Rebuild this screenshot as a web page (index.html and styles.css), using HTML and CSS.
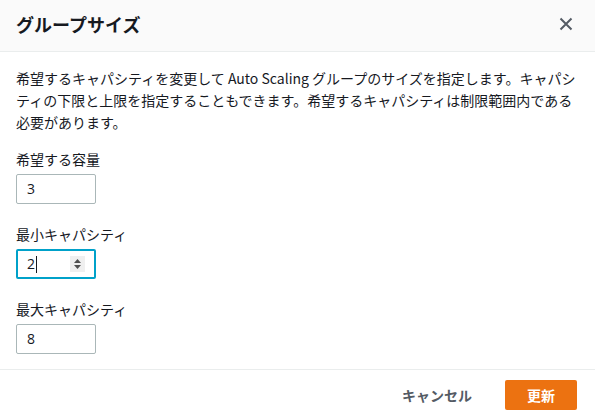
FILE: index.html
```html
<!DOCTYPE html>
<html lang="ja">
<head>
<meta charset="utf-8">
<title>グループサイズ</title>
<link rel="stylesheet" href="styles.css">
</head>
<body>
<div class="modal">
  <div class="modal-header">
    <h2 class="modal-title">グループサイズ</h2>
    <button class="close-btn" aria-label="閉じる">
      <svg width="16" height="16" viewBox="0 0 16 16"><path d="M2.5 2.5 L13.5 13.5 M13.5 2.5 L2.5 13.5" stroke="#545b64" stroke-width="2" fill="none"/></svg>
    </button>
  </div>
  <div class="modal-body">
    <p class="desc">希望するキャパシティを変更して Auto Scaling グループのサイズを指定します。キャパシティの下限と上限を指定することもできます。希望するキャパシティは制限範囲内である必要があります。</p>
    <div class="fields">
      <div class="field">
        <label class="label">希望する容量</label>
        <div class="input"><span>3</span></div>
      </div>
      <div class="field">
        <label class="label">最小キャパシティ</label>
        <div class="input focused"><span>2</span><span class="caret"></span><span class="grow"></span>
          <span class="spinner">
            <svg width="9" height="12" viewBox="0 0 9 12"><path d="M4.5 1 L8 5 L1 5 Z M4.5 11 L8 7 L1 7 Z" fill="#505050"/></svg>
          </span>
        </div>
      </div>
      <div class="field">
        <label class="label">最大キャパシティ</label>
        <div class="input"><span>8</span></div>
      </div>
    </div>
  </div>
  <div class="modal-footer">
    <button class="btn-link">キャンセル</button>
    <button class="btn-primary">更新</button>
  </div>
</div>
</body>
</html>
```
FILE: styles.css
```css
html, body {
  margin: 0;
  padding: 0;
  background: #ffffff;
  overflow: hidden;
}
body {
  font-family: "Noto Sans CJK JP", "Noto Sans", sans-serif;
  font-size: 14px;
  line-height: 22px;
  color: #16191f;
}
.modal {
  width: 595px;
}
.modal-header {
  box-sizing: border-box;
  height: 52px;
  padding: 12px 16px 15px 16px;
  background: #fafafa;
  border-bottom: 1px solid #eaeded;
  display: flex;
  align-items: center;
  justify-content: space-between;
}
.modal-title {
  margin: 0;
  font-size: 18px;
  line-height: 24px;
  font-weight: 700;
  color: #16191f;
}
.close-btn {
  border: 0;
  background: transparent;
  padding: 0;
  margin-right: 5px;
  width: 16px;
  height: 16px;
  display: flex;
}
.modal-body {
  padding: 15px 16px 15px 16px;
}
.desc {
  margin: 0 0 15px 0;
}
.fields {
  display: flex;
  flex-direction: column;
  gap: 19px;
}
.field {
  display: flex;
  flex-direction: column;
  gap: 4px;
}
.label {
  color: #16191f;
}
.input {
  box-sizing: border-box;
  width: 80px;
  height: 30px;
  border: 1px solid #aab7b8;
  border-radius: 2px;
  padding: 0 8px 0 10px;
  display: flex;
  align-items: center;
  font-family: "Open Sans", "Noto Sans", sans-serif;
  font-size: 14px;
  color: #16191f;
}
.input.focused {
  border: 2px solid #00a1c9;
  padding-left: 9px;
  padding-right: 9px;
}
.caret {
  width: 1px;
  height: 17px;
  background: #16191f;
  margin-left: 1px;
}
.grow {
  flex: 1;
}
.spinner {
  width: 15px;
  height: 16px;
  background: #efefef;
  display: flex;
  align-items: center;
  justify-content: center;
}
.modal-footer {
  border-top: 1px solid #eaeded;
  padding: 10px 18px 10px 16px;
  display: flex;
  justify-content: flex-end;
  align-items: center;
  gap: 11px;
}
.btn-link {
  border: 0;
  background: transparent;
  font-family: "Noto Sans CJK JP", sans-serif;
  font-size: 14px;
  font-weight: 700;
  color: #545b64;
  height: 30px;
  padding: 0 22px;
  letter-spacing: 0;
}
.btn-primary {
  border: 0;
  border-radius: 2px;
  background: #ec7211;
  color: #ffffff;
  font-family: "Noto Sans CJK JP", sans-serif;
  font-size: 14px;
  font-weight: 700;
  height: 30px;
  padding: 0 22px;
}
```
